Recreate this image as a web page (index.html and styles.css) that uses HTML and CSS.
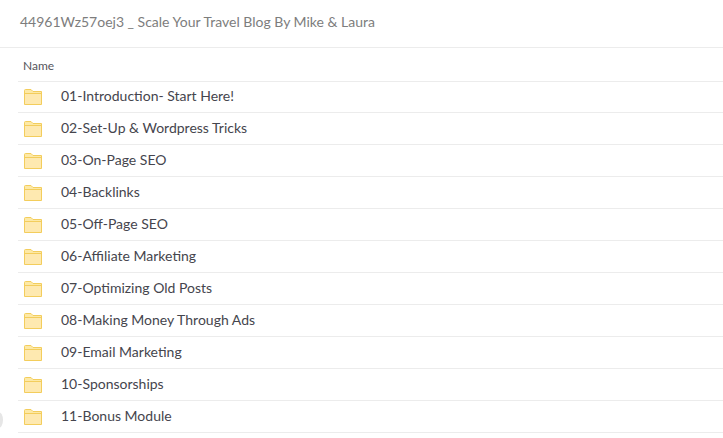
FILE: index.html
```html
<!DOCTYPE html>
<html lang="en">
<head>
<meta charset="UTF-8">
<title>Scale Your Travel Blog</title>
<link rel="stylesheet" href="styles.css">
</head>
<body>
<svg width="0" height="0" class="defs">
	<symbol id="folder" viewBox="0 0 18 16">
		<path d="M0.5 15.5V1.5Q0.5 0.5 1.5 0.5H7L9 2.5H17.5V15.5Z" fill="#fde9a6" stroke="#f3cd5c"/>
		<path d="M1 4.5H17" stroke="#f3cd5c"/>
		<rect x="1" y="5" width="16" height="10" fill="#fee9b0"/>
	</symbol>
</svg>
<div class="title">44961Wz57oej3 _ Scale Your Travel Blog By Mike &amp; Laura</div>
<div class="list">
	<div class="head">Name</div>
	<div class="row"><svg class="icon"><use href="#folder"/></svg><span>01-Introduction- Start Here!</span></div>
	<div class="row"><svg class="icon"><use href="#folder"/></svg><span>02-Set-Up &amp; Wordpress Tricks</span></div>
	<div class="row"><svg class="icon"><use href="#folder"/></svg><span>03-On-Page SEO</span></div>
	<div class="row"><svg class="icon"><use href="#folder"/></svg><span>04-Backlinks</span></div>
	<div class="row"><svg class="icon"><use href="#folder"/></svg><span>05-Off-Page SEO</span></div>
	<div class="row"><svg class="icon"><use href="#folder"/></svg><span>06-Affiliate Marketing</span></div>
	<div class="row"><svg class="icon"><use href="#folder"/></svg><span>07-Optimizing Old Posts</span></div>
	<div class="row"><svg class="icon"><use href="#folder"/></svg><span>08-Making Money Through Ads</span></div>
	<div class="row"><svg class="icon"><use href="#folder"/></svg><span>09-Email Marketing</span></div>
	<div class="row"><svg class="icon"><use href="#folder"/></svg><span>10-Sponsorships</span></div>
	<div class="row"><svg class="icon"><use href="#folder"/></svg><span>11-Bonus Module</span></div>
</div>
<div class="blob"></div>
</body>
</html>
```
FILE: styles.css
```css
html, body {
	height: 100%;
}
body {
	margin: 0;
	background: #fff;
	font-family: "Lato", sans-serif;
	color: #45454d;
	overflow: hidden;
}
.defs {
	position: absolute;
}
.title {
	height: 48px;
	box-sizing: border-box;
	padding: 13px 0 0 20px;
	line-height: 18px;
	font-size: 14px;
	color: #7d7d7d;
	border-bottom: 1px solid #ececec;
}
.list {
	margin-left: 18px;
}
.head {
	height: 34px;
	box-sizing: border-box;
	padding: 1px 0 0 5px;
	line-height: 34px;
	font-size: 12px;
	color: #55555c;
	border-bottom: 1px solid #ececec;
}
.row {
	display: flex;
	align-items: flex-start;
	height: 32px;
	box-sizing: border-box;
	padding: 8px 0 0 6px;
	font-size: 14px;
	line-height: 16px;
	border-bottom: 1px solid #ececec;
}
.head + .row {
	height: 31px;
	padding-top: 7px;
}
.row span {
	margin-top: -1px;
}
.icon {
	width: 18px;
	height: 16px;
	margin-right: 19px;
	flex: none;
}
.blob {
	position: absolute;
	left: -6px;
	top: 412px;
	width: 9px;
	height: 16px;
	border-radius: 50%;
	background: #e6e6e6;
}
```
